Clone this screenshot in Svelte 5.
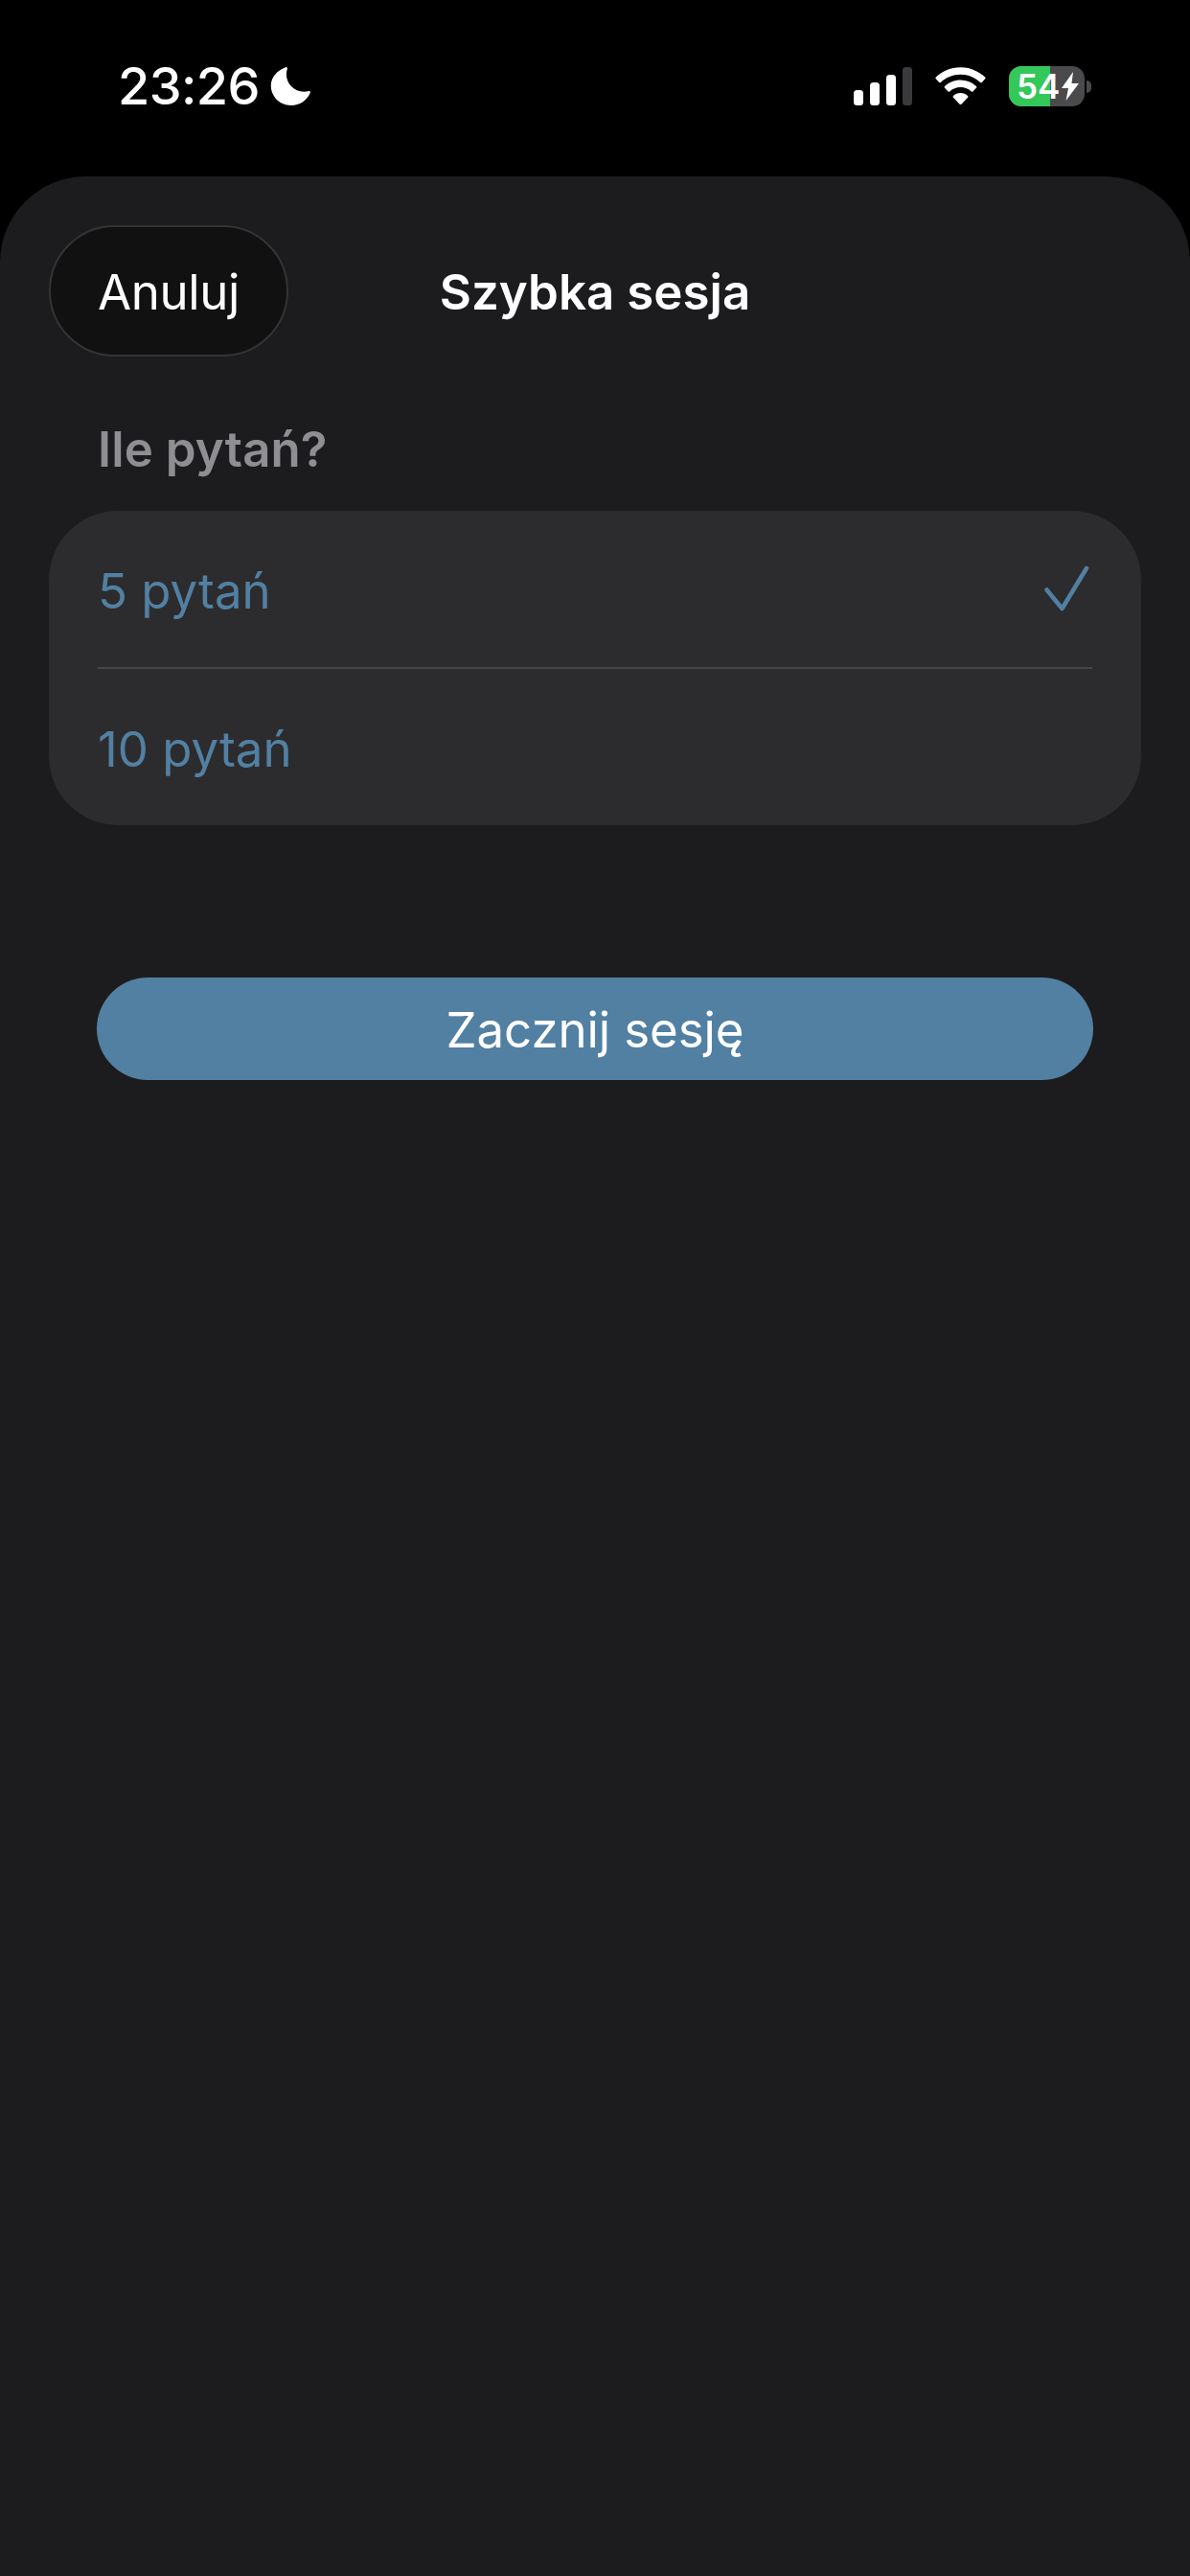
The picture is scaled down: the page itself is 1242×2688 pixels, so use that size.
<script>
  const options = [
    { label: '5 pytań', selected: true },
    { label: '10 pytań', selected: false }
  ];
</script>

<div class="screen">
  <header class="status">
    <div class="left">
      <span class="time">23:26</span>
      <svg class="moon" viewBox="0 0 44 44" width="43" height="43"><path fill="#fff" d="M16.5 1.2c1-.5 2.100.4 1.800 1.500-.7 2-1 4-1 6.100 0 10.300 8.300 18.600 18.600 18.600 1.900 0 3.700-.3 5.400-.8 1.100-.3 2 .8 1.400 1.800C39.300 36.800 31.500 42 22.300 42 10.300 42 .8 32.500.8 20.800.8 12.100 7 4.700 16.500 1.200z"/></svg>
    </div>
    <div class="right">
      <svg class="signal" viewBox="0 0 61 40" width="61" height="40">
        <rect x="0" y="24" width="10" height="16" rx="3.500" fill="#fff"/>
        <rect x="17" y="16" width="10" height="24" rx="3.500" fill="#fff"/>
        <rect x="34" y="8" width="10" height="32" rx="3.500" fill="#fff"/>
        <rect x="51" y="0" width="10" height="40" rx="3.500" fill="#3a3a3c"/>
      </svg>
      <svg class="wifi" viewBox="0 0 54 40" width="53" height="40">
        <path fill="#fff" d="M27 0C16.800 0 7.600 4 .8 10.400c-.5.500-.5 1.200 0 1.700l3.500 3.700c.5.500 1.200.5 1.700 0C11.500 10.600 18.900 7.500 27 7.500s15.500 3.100 21 8.300c.5.500 1.200.5 1.700 0l3.500-3.700c.5-.5.500-1.200 0-1.700C46.400 4 37.200 0 27 0z"/>
        <path fill="#fff" d="M27 13.500c-6.500 0-12.400 2.500-16.800 6.600-.5.500-.5 1.200 0 1.700l3.600 3.700c.5.500 1.200.5 1.700 0 3-2.700 7-4.400 11.500-4.400s8.500 1.700 11.500 4.400c.5.500 1.200.5 1.700 0l3.600-3.700c.5-.5.500-1.200 0-1.700C39.400 16 33.500 13.500 27 13.500z"/>
        <path fill="#fff" d="M27 27.200c-3 0-5.700 1.100-7.700 3-.5.500-.5 1.200 0 1.700l6.800 7.100c.5.500 1.300.5 1.800 0l6.800-7.100c.5-.5.500-1.200 0-1.700-2-1.900-4.700-3-7.700-3z"/>
      </svg>
      <div class="battery">
        <div class="cell">
          <div class="fill"></div>
          <span class="pct">54</span>
          <svg class="bolt" viewBox="0 0 20 30" width="20" height="30"><path fill="#fff" d="M13 0 1 17h7l-2.500 13L19 12h-7.500z"/></svg>
        </div>
        <div class="nub"></div>
      </div>
    </div>
  </header>

  <main class="sheet">
    <div class="navbar">
      <button class="cancel">Anuluj</button>
      <h1>Szybka sesja</h1>
    </div>

    <h2>Ile pytań?</h2>

    <div class="card">
      {#each options as o, i}
        <div class="row" class:border={i > 0}>
          <span class="label">{o.label}</span>
          {#if o.selected}
            <svg viewBox="0 0 48 48" width="48" height="48"><path d="M3.500 25.500 19.500 45 45 3" fill="none" stroke="#5280a2" stroke-width="4.500" stroke-linecap="round" stroke-linejoin="round"/></svg>
          {/if}
        </div>
      {/each}
    </div>

    <button class="start">Zacznij sesję</button>
  </main>
</div>

<style>
  :global(body) { margin: 0; background: #000; }
  .screen {
    width: 1242px; height: 2688px; background: #000; display: flex; flex-direction: column;
    font-family: Inter, "Liberation Sans", sans-serif; color: #fff; overflow: hidden;
  }
  .status {
    height: 184px; flex: none; box-sizing: border-box; padding: 0 103px 0 123px;
    display: flex; justify-content: space-between; align-items: flex-start;
  }
  .left { display: flex; align-items: center; gap: 11px; margin-top: 60px; height: 60px; }
  .time { font-size: 54px; font-weight: 500; letter-spacing: -0.6px; line-height: 60px; }
  .right { display: flex; align-items: center; height: 48px; margin-top: 66px; }
  .wifi { margin-left: 24px; }
  .battery { display: flex; align-items: center; margin-left: 24px; }
  .cell {
    position: relative; width: 79px; height: 42px; border-radius: 13px; overflow: hidden;
    background: #4a4a4c; display: flex; align-items: center; padding-left: 8px; box-sizing: border-box;
  }
  .fill { position: absolute; left: 0; top: 0; bottom: 0; width: 43px; background: #34c759; }
  .pct { position: relative; font-size: 35px; font-weight: 600; line-height: 42px; }
  .bolt { position: relative; margin-left: 1px; }
  .nub { width: 5px; height: 13px; background: #4a4a4c; border-radius: 0 6px 6px 0; margin-left: 2px; }

  .sheet {
    flex: 1; background: #1c1c1e; border-radius: 90px 90px 0 0;
    padding: 0 51px; display: flex; flex-direction: column;
  }
  .navbar { position: relative; height: 137px; margin-top: 51px; display: flex; align-items: center; justify-content: center; }
  .cancel {
    position: absolute; left: 0; top: 0; width: 250px; height: 137px; border-radius: 69px;
    background: #111112; border: 2px solid #343436; color: #fff; box-sizing: border-box;
    font: 400 51px Inter, "Liberation Sans", sans-serif; letter-spacing: -0.4px; padding: 2px 0 0;
  }
  h1 { margin: 2px 0 0; font-size: 51px; font-weight: 600; letter-spacing: 0.05px; line-height: 60px; }
  h2 {
    margin: 67px 0 0 51px; font-size: 51px; font-weight: 600; line-height: 60px; color: #8e8e93; letter-spacing: 0.1px;
  }
  .card { margin-top: 34px; background: #2c2c2e; border-radius: 72px; padding: 0 51px; }
  .row {
    height: 163px; display: flex; align-items: center; justify-content: space-between;
    color: #5280a2; font-size: 51px; letter-spacing: 0; box-sizing: border-box;
  }
  .label { padding-top: 3px; }
  .row.border { height: 165px; border-top: 2px solid #464648; }
  .row svg { margin-right: 3px; margin-top: -2px; }
  .start {
    margin: 159px 50px 0; height: 107px; border: none; border-radius: 54px; background: #5280a2; color: #fff;
    font: 400 51px Inter, "Liberation Sans", sans-serif; letter-spacing: -0.1px; padding: 2px 0 0;
  }
</style>
